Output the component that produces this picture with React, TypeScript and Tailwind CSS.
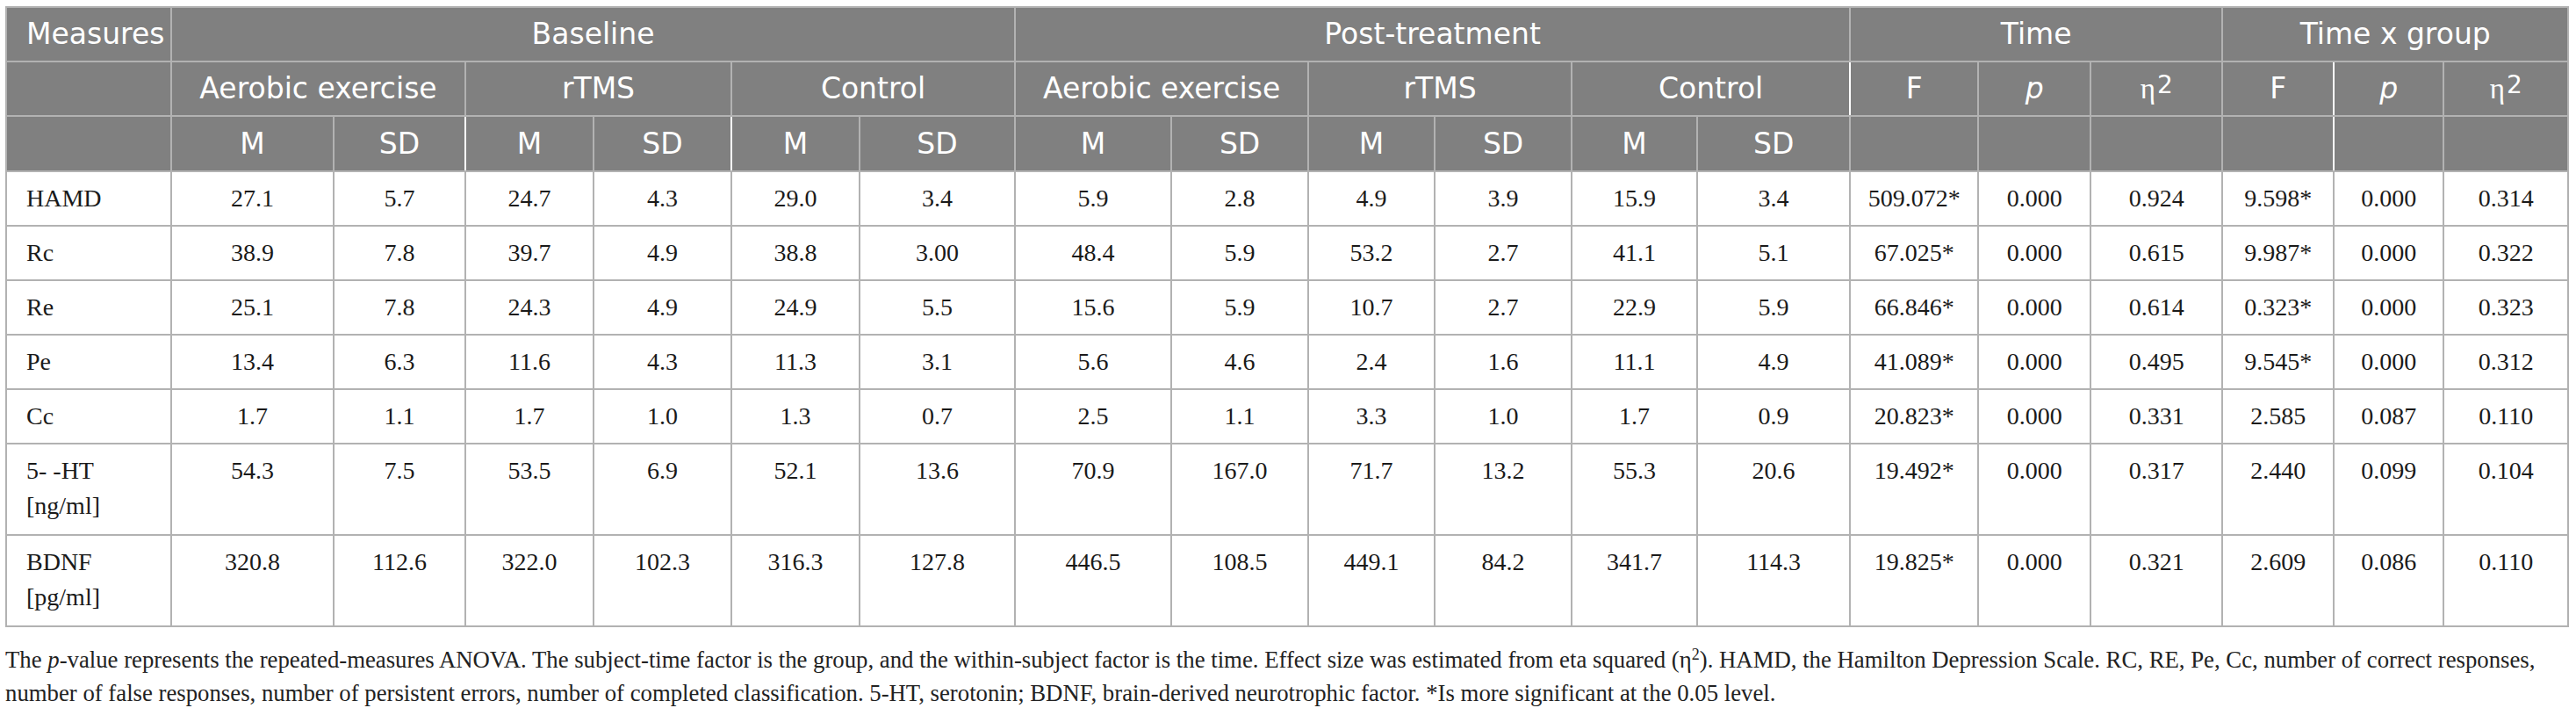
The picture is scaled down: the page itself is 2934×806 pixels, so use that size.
import React from "react"

type Row = { label: string[]; values: string[] }

const colWidths = [188, 185, 150, 146, 157, 146, 177, 178, 156, 144, 156, 143, 174, 146, 128, 150, 127, 125, 142]

const rows: Row[] = [
    { label: ["HAMD"], values: ["27.1", "5.7", "24.7", "4.3", "29.0", "3.4", "5.9", "2.8", "4.9", "3.9", "15.9", "3.4", "509.072*", "0.000", "0.924", "9.598*", "0.000", "0.314"] },
    { label: ["Rc"], values: ["38.9", "7.8", "39.7", "4.9", "38.8", "3.00", "48.4", "5.9", "53.2", "2.7", "41.1", "5.1", "67.025*", "0.000", "0.615", "9.987*", "0.000", "0.322"] },
    { label: ["Re"], values: ["25.1", "7.8", "24.3", "4.9", "24.9", "5.5", "15.6", "5.9", "10.7", "2.7", "22.9", "5.9", "66.846*", "0.000", "0.614", "0.323*", "0.000", "0.323"] },
    { label: ["Pe"], values: ["13.4", "6.3", "11.6", "4.3", "11.3", "3.1", "5.6", "4.6", "2.4", "1.6", "11.1", "4.9", "41.089*", "0.000", "0.495", "9.545*", "0.000", "0.312"] },
    { label: ["Cc"], values: ["1.7", "1.1", "1.7", "1.0", "1.3", "0.7", "2.5", "1.1", "3.3", "1.0", "1.7", "0.9", "20.823*", "0.000", "0.331", "2.585", "0.087", "0.110"] },
    { label: ["5- -HT", "[ng/ml]"], values: ["54.3", "7.5", "53.5", "6.9", "52.1", "13.6", "70.9", "167.0", "71.7", "13.2", "55.3", "20.6", "19.492*", "0.000", "0.317", "2.440", "0.099", "0.104"] },
    { label: ["BDNF", "[pg/ml]"], values: ["320.8", "112.6", "322.0", "102.3", "316.3", "127.8", "446.5", "108.5", "449.1", "84.2", "341.7", "114.3", "19.825*", "0.000", "0.321", "2.609", "0.086", "0.110"] },
]

const th = "border-2 border-[#b2b2b2] bg-[#808080] text-white font-normal text-center align-middle p-0"

const Eta = () => (
    <span>
        <span className="font-['Liberation_Serif',serif]">η</span>
        <sup className="text-[28px] relative -top-[6px] ml-[2px]">2</sup>
    </span>
)

const Italic = ({ t }: { t: string }) => <span className="italic">{t}</span>

export default function App() {
    const groups = ["Aerobic exercise", "rTMS", "Control"]
    const stats: React.ReactNode[] = ["F", <Italic t="p" />, <Eta />]

    return <div className="bg-white min-h-screen pt-[7px] pl-[6px]">
        <table className="table-fixed border-collapse w-[2918px] font-['DejaVu_Sans',sans-serif] text-[33px]">
            <colgroup>
                {colWidths.map((w, i) => <col key={i} style={{ width: w }} />)}
            </colgroup>
            <thead>
                <tr className="h-[62px]">
                    <th className={`${th} !text-left pl-[22px]`}>Measures</th>
                    <th className={th} colSpan={6}>Baseline</th>
                    <th className={th} colSpan={6}>Post-treatment</th>
                    <th className={th} colSpan={3}>Time</th>
                    <th className={th} colSpan={3}>Time x group</th>
                </tr>
                <tr className="h-[62px]">
                    <th className={th}></th>
                    {[0, 1].map(k => groups.map((g, i) =>
                        <th key={`${k}-${i}`} className={`${th} ${k == 1 && i == 2 ? "border-r-white" : ""}`} colSpan={2}>{g}</th>
                    ))}
                    {stats.map((s, i) => <th key={`t${i}`} className={th}>{s}</th>)}
                    {stats.map((s, i) => <th key={`g${i}`} className={`${th} ${i == 0 ? "border-r-white" : ""}`}>{s}</th>)}
                </tr>
                <tr className="h-[63px]">
                    <th className={th}></th>
                    {Array.from({ length: 12 }).map((_, i) =>
                        <th key={i} className={`${th} ${i == 1 || i == 3 ? "border-r-white" : ""}`}>{i % 2 == 0 ? "M" : "SD"}</th>
                    )}
                    {Array.from({ length: 6 }).map((_, i) =>
                        <th key={`e${i}`} className={`${th} ${i == 3 ? "border-r-white" : ""}`}></th>
                    )}
                </tr>
            </thead>
            <tbody className="font-['Liberation_Serif',serif] text-[28px] text-[#1a1a1a]">
                {rows.map(r => (
                    <tr key={r.label[0]} className={r.label.length > 1 ? "h-[104px]" : "h-[62px]"}>
                        <td className="border-2 border-[#b2b2b2] align-top pt-[10px] pl-[22px] leading-[40px]">
                            {r.label.map(l => <div key={l}>{l}</div>)}
                        </td>
                        {r.values.map((v, i) => (
                            <td key={i} className="border-2 border-[#b2b2b2] align-top pt-[10px] text-center leading-[40px]">{v}</td>
                        ))}
                    </tr>
                ))}
            </tbody>
        </table>
        <p className="mt-[18px] font-['Liberation_Serif',serif] text-[26.75px] leading-[38px] text-[#222] whitespace-nowrap">
            The <Italic t="p" />-value represents the repeated-measures ANOVA. The subject-time factor is the group, and the within-subject factor is the time. Effect size was estimated from eta squared (η<sup className="text-[18px]">2</sup>). HAMD, the Hamilton Depression Scale. RC, RE, Pe, Cc, number of correct responses,
            <br />
            number of false responses, number of persistent errors, number of completed classification. 5-HT, serotonin; BDNF, brain-derived neurotrophic factor. *Is more significant at the 0.05 level.
        </p>
    </div>
}
